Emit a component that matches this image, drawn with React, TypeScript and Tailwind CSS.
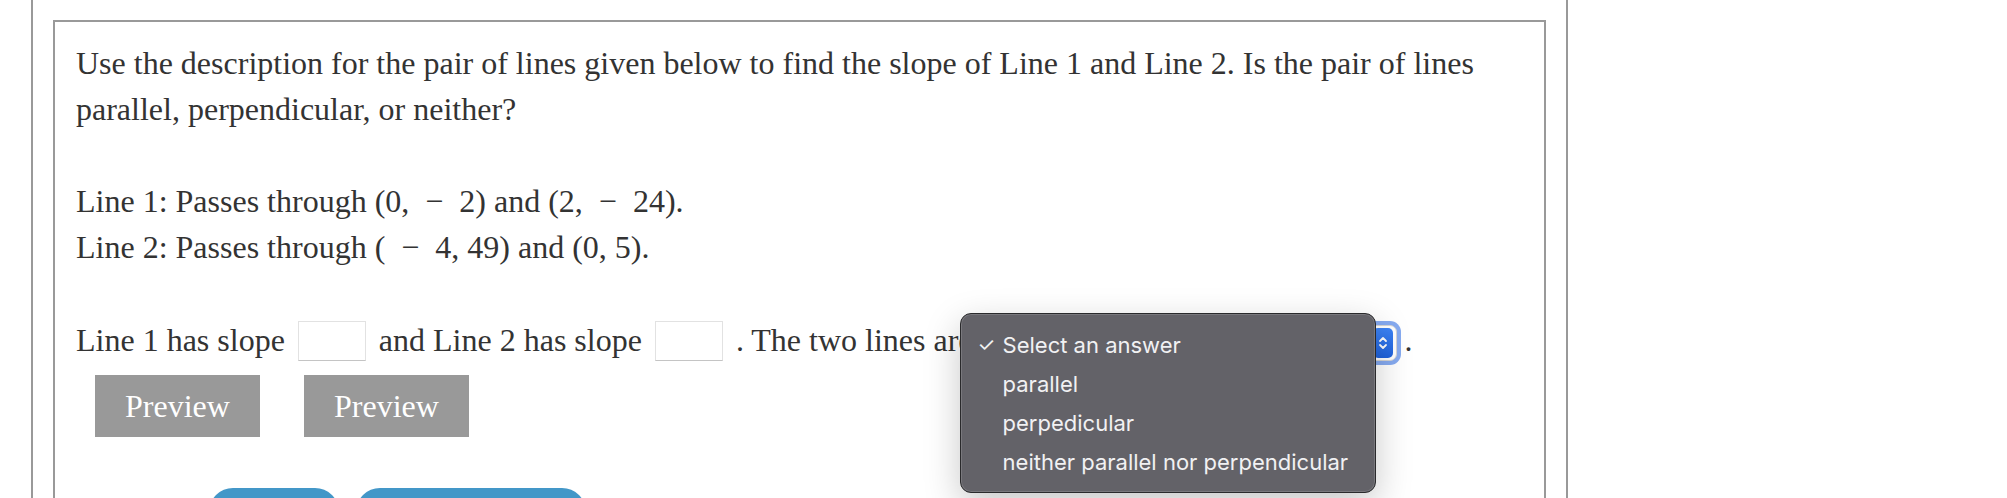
import React from 'react';

const serif = { fontFamily: '"Liberation Serif", "Times New Roman", serif' };

const AnswerBox: React.FC = () => (
  <span className="inline-block w-[68px] h-[40px] align-[-10px] bg-white border border-[#e2e2e2] border-b-[#c4c4c4] mx-[5px]" />
);

const options = ['Select an answer', 'parallel', 'perpedicular', 'neither parallel nor perpendicular'];

const SelectMenu: React.FC = () => (
  <span className="relative inline-block align-[-10px] w-[416px] h-[36px]">
    {/* the closed select, mostly hidden by the open menu */}
    <span className="absolute inset-0 rounded-[7px] bg-white border border-[#d5d5d5] ring-4 ring-[#86aaf0]">
      <span className="absolute right-[3px] top-[2px] w-[20px] h-[30px] rounded-[5px] bg-gradient-to-b from-[#3d83f5] to-[#1f62dc] flex items-center justify-center">
        <svg width="10" height="16" viewBox="0 0 10 16" fill="none" stroke="white" strokeWidth="1.8" strokeLinecap="round" strokeLinejoin="round">
          <path d="M2 6 L5 3 L8 6" />
          <path d="M2 10 L5 13 L8 10" />
        </svg>
      </span>
    </span>

    {/* native popup menu */}
    <div
      className="absolute -left-[21px] -top-[12px] z-10 w-[416px] h-[180px] rounded-[11px] bg-[#636268] border border-[#2a2a2c] shadow-[0_12px_36px_rgba(0,0,0,0.22),inset_0_0_0_1px_rgba(255,255,255,0.14)] py-[12px] text-[#f1f1f3]"
      style={{ fontFamily: 'Inter, "Noto Sans", sans-serif' }}
    >
      {options.map((o, i) => (
        <div key={o} className="flex items-center h-[39px] pl-[17px] text-[22px] leading-[39px]">
          <span className="w-[25px] text-[20px]">{i === 0 ? '✓' : ''}</span>
          <span>{o}</span>
        </div>
      ))}
    </div>
  </span>
);

export default function App() {
  return (
    <div className="h-[498px] w-[2007px] overflow-hidden bg-white text-[#333]" style={serif}>
      <div className="ml-[31px] w-[1537px] h-full border-x-2 border-[#999] px-[20px] pt-[20px]">
        <div className="min-h-[700px] border-2 border-[#999] pl-[21px] pr-[21px] pt-[18px] text-[32px] leading-[46px]">
          <p>
            Use the description for the pair of lines given below to find the slope of Line 1 and Line 2. Is the
            pair of lines parallel, perpendicular, or neither?
          </p>

          <div className="mt-[46px]">
            <div>Line 1: Passes through (0,&nbsp;&nbsp;−&nbsp;&nbsp;2) and (2,&nbsp;&nbsp;−&nbsp;&nbsp;24).</div>
            <div>Line 2: Passes through (&nbsp;&nbsp;−&nbsp;&nbsp;4, 49) and (0, 5).</div>
          </div>

          <div className="mt-[47px] whitespace-nowrap">
            Line 1 has slope{' '}
            <AnswerBox />
            {' '}and Line 2 has slope{' '}
            <AnswerBox />
            {' '}. The two lines are{' '}
            <SelectMenu />
            {' '}.
          </div>

          <div className="mt-[12px] ml-[19px] flex gap-[44px]">
            <button className="w-[165px] h-[62px] bg-[#999] text-white text-[32px] flex items-center justify-center">
              Preview
            </button>
            <button className="w-[165px] h-[62px] bg-[#999] text-white text-[32px] flex items-center justify-center">
              Preview
            </button>
          </div>

          <div className="mt-[51px] ml-[133px] flex gap-[17px]">
            <button className="w-[130px] h-[50px] rounded-[24px] bg-[#4397c8]" />
            <button className="w-[230px] h-[50px] rounded-[24px] bg-[#4397c8]" />
          </div>
        </div>
      </div>
    </div>
  );
}
